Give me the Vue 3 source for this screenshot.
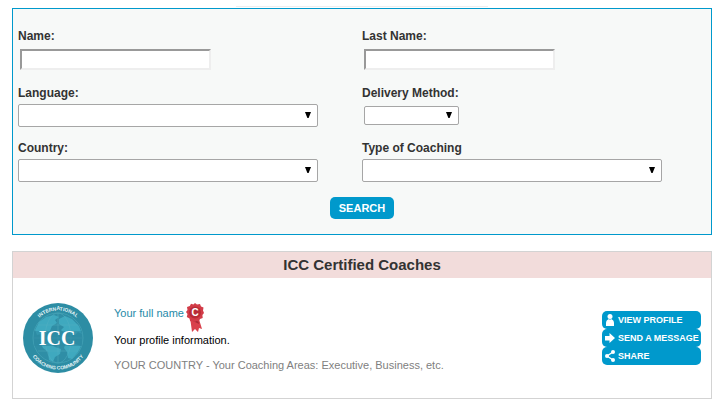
<script setup>
import { ref } from 'vue';

const form = ref({
  name: '',
  lastName: '',
  language: '',
  delivery: '',
  country: '',
  coaching: ''
});

const fields = [
  { key: 'name', label: 'Name:', type: 'text' },
  { key: 'lastName', label: 'Last Name:', type: 'text' },
  { key: 'language', label: 'Language:', type: 'select' },
  { key: 'delivery', label: 'Delivery Method:', type: 'select', small: true },
  { key: 'country', label: 'Country:', type: 'select' },
  { key: 'coaching', label: 'Type of Coaching', type: 'select' }
];

const coaches = [
  {
    id: 1,
    name: 'Your full name',
    info: 'Your profile information.',
    details: 'YOUR COUNTRY - Your Coaching Areas: Executive, Business, etc.'
  }
];
</script>

<template>
  <main class="page">
    <div class="top-line"></div>
    <form class="search-panel" @submit.prevent>
      <div class="fields">
        <div v-for="field in fields" :key="field.key" class="field">
          <label :for="field.key">{{ field.label }}</label>
          <input
            v-if="field.type === 'text'"
            :id="field.key"
            v-model="form[field.key]"
            type="text"
            class="text-input"
          />
          <div v-else class="select-box" :class="{ small: field.small }">
            <select :id="field.key" v-model="form[field.key]">
              <option value=""></option>
            </select>
            <svg class="arrow" viewBox="0 0 6 6" aria-hidden="true"><path d="M0 0h6L3.600 6H2.400z" /></svg>
          </div>
        </div>
      </div>
      <button type="submit" class="search-button">SEARCH</button>
    </form>

    <section class="results">
      <h2>ICC Certified Coaches</h2>
      <article v-for="coach in coaches" :key="coach.id" class="coach">
        <svg class="logo" viewBox="0 0 70 70" role="img" aria-label="International Coaching Community">
          <defs>
            <path id="arc-top" d="M7.500 35a27.500 27.500 0 0 1 55 0" />
            <path id="arc-bottom" d="M3.500 35a31.500 31.500 0 0 0 63 0" />
          </defs>
          <circle cx="35" cy="35" r="35" fill="#2d8da4" />
          <circle cx="35" cy="35" r="25" fill="#2f8ea6" />
          <g fill="#3fa9bf">
            <path d="M12 27l4-8 7-5 8-2 5 2-4 3 2 3-5 3-2 5-4 2-1 4-4-3-4 1z" />
            <path d="M18 41l7-1 7 4 6 2-1 5-5 3-2 5-4-2-1-8-5-4z" />
            <path d="M36 16l6-3 7 3 7 7 3 8-4-2-3 3-5-3-5 2-4-4 3-3-5-3z" />
            <path d="M42 42l10-1 6 2-3 6-6 7-4-1-1-6-3-4z" />
          </g>
          <g fill="none" stroke="#58b3c5" stroke-width=".6" opacity=".7">
            <circle cx="35" cy="35" r="25" />
            <ellipse cx="35" cy="35" rx="13" ry="25" />
            <path d="M35 10v50M11 35h48M15 22h40M15 48h40" />
          </g>
          <path d="M11 28h48v15H11z" fill="#2d8ba3" opacity=".6" />
          <text class="logo-name" x="34" y="42" text-anchor="middle">ICC</text>
          <text class="logo-ring">
            <textPath href="#arc-top" startOffset="50%" text-anchor="middle">INTERNATIONAL</textPath>
          </text>
          <text class="logo-ring">
            <textPath href="#arc-bottom" startOffset="50%" text-anchor="middle">COACHING COMMUNITY</textPath>
          </text>
        </svg>

        <div class="coach-text">
          <div class="coach-name">
            <a href="#">{{ coach.name }}</a>
            <svg class="ribbon" viewBox="0 0 18 30" role="img" aria-label="Certified">
              <path d="M4 14l2 15 3-3 3 3 1-4 3 1-4-13z" fill="#d9414c" />
              <path d="M6 16l6 0 1 5-6-3z" fill="#a92a36" />
              <path
                d="M9 0l2 1.500L14 1l1 2.600 2.500 1-.5 3L18 10l-1.600 2 .3 3-2.700 1-1.400 2.600-2.600-.6L9 19l-2-1-2.800.2L3.500 15.500.8 14 1.500 11 0 9l1.500-2L1 4l2.800-1L5 .8l2.400.6z"
                fill="#d23c48"
              />
              <circle cx="9" cy="9.500" r="6" fill="#b92b37" />
              <text class="ribbon-letter" x="9" y="13" text-anchor="middle">C</text>
            </svg>
          </div>
          <p class="coach-info">{{ coach.info }}</p>
          <p class="coach-details">{{ coach.details }}</p>
        </div>

        <div class="actions">
          <button type="button">
            <svg viewBox="0 0 10 12" aria-hidden="true">
              <circle cx="5" cy="2.500" r="2.500" />
              <path d="M1 12V9q0-3 3-4l1 1 1-1q3 1 3 4v3z" />
            </svg>
            VIEW PROFILE
          </button>
          <button type="button">
            <svg viewBox="0 0 10 12" aria-hidden="true">
              <path d="M0 4h4.500V1L10 6l-5.500 5V8.500H0z" />
            </svg>
            SEND A MESSAGE
          </button>
          <button type="button">
            <svg viewBox="0 0 10 12" aria-hidden="true">
              <path d="M8 2L2 6l6 4" fill="none" stroke="#fff" stroke-width="1.300" />
              <circle cx="8" cy="2" r="2" />
              <circle cx="2" cy="6" r="2" />
              <circle cx="8" cy="10" r="2" />
            </svg>
            SHARE
          </button>
        </div>
      </article>
    </section>
  </main>
</template>

<style>
body {
  margin: 0;
  background: #ffffff;
}
</style>

<style scoped>
.page {
  padding: 6px 13px 12px 12px;
  font-family: 'Liberation Sans', Arial, sans-serif;
  font-size: 12px;
  color: #333333;
}

.page *,
.page {
  box-sizing: border-box;
}

.top-line {
  width: 36%;
  height: 1px;
  margin: 0 auto 1px;
  background: #eeeeee;
}

.search-panel {
  display: flex;
  flex-direction: column;
  gap: 15px;
  padding: 19px 5px 15px;
  border: 1px solid #0099cc;
  background: #f7f9f8;
}

.fields {
  display: grid;
  grid-template-columns: 1fr 1fr;
  row-gap: 13px;
}

.field {
  display: flex;
  flex-direction: column;
  align-items: flex-start;
  gap: 3px;
}

.field label {
  line-height: 16px;
  font-weight: 700;
}

.text-input {
  width: 191px;
  max-width: 96%;
  height: 21px;
  margin: 2px;
  padding: 1px 2px;
  border: 2px solid;
  border-color: #999999 #eeeeee #eeeeee #999999;
  background: #ffffff;
  font: inherit;
}

.select-box {
  position: relative;
  width: 300px;
  max-width: 96%;
  height: 23px;
}

.select-box.small {
  width: 95px;
  height: 19px;
  margin: 2px;
}

.select-box select {
  display: block;
  width: 100%;
  height: 100%;
  padding: 0 18px 0 4px;
  border: 1px solid #a6a6a6;
  border-radius: 2px;
  background: #ffffff;
  font: inherit;
  appearance: none;
}

.arrow {
  position: absolute;
  top: calc(50% - 4px);
  right: 7px;
  width: 6px;
  height: 6px;
  pointer-events: none;
}

.search-button {
  align-self: center;
  width: 64px;
  height: 22px;
  padding: 0;
  border: 0;
  border-radius: 5px;
  background: #0099cc;
  color: #ffffff;
  font: 700 11px 'Liberation Sans', Arial, sans-serif;
}

.results {
  margin-top: 16px;
  border: 1px solid #d3d3d3;
}

.results h2 {
  margin: 0;
  background: #f2dcdb;
  font-size: 15px;
  line-height: 26px;
  text-align: center;
}

.coach {
  display: flex;
  gap: 21px;
  padding: 25px 10px 24px;
}

.logo {
  flex: none;
  width: 70px;
  height: 70px;
}

.logo-name {
  fill: #ffffff;
  font: 700 20px 'Liberation Serif', 'Times New Roman', serif;
}

.logo-ring {
  fill: #e6f5f8;
  font: 700 5px 'Liberation Sans', Arial, sans-serif;
}

.coach-text {
  flex: 1;
  font-size: 11px;
}

.coach-name {
  display: flex;
  gap: 2px;
  height: 28px;
  line-height: 20px;
}

.coach-name a {
  color: #1f8aa8;
  text-decoration: none;
}

.ribbon {
  width: 18px;
  height: 30px;
}

.ribbon-letter {
  fill: #ffffff;
  font: 700 10px 'Liberation Sans', Arial, sans-serif;
}

.coach-info,
.coach-details {
  margin: 0;
  line-height: 18px;
}

.coach-info {
  margin-bottom: 7px;
  color: #000000;
}

.coach-details {
  color: #808080;
}

.actions {
  display: flex;
  flex-direction: column;
  width: 99px;
  padding-top: 8px;
}

.actions button {
  display: flex;
  align-items: center;
  gap: 3px;
  height: 18px;
  padding: 0 3px;
  border: 0;
  border-radius: 5px;
  background: #0099cc;
  color: #ffffff;
  font: 700 9px 'Liberation Sans', Arial, sans-serif;
  white-space: nowrap;
}

.actions svg {
  flex: none;
  width: 10px;
  height: 12px;
  fill: #ffffff;
}
</style>
